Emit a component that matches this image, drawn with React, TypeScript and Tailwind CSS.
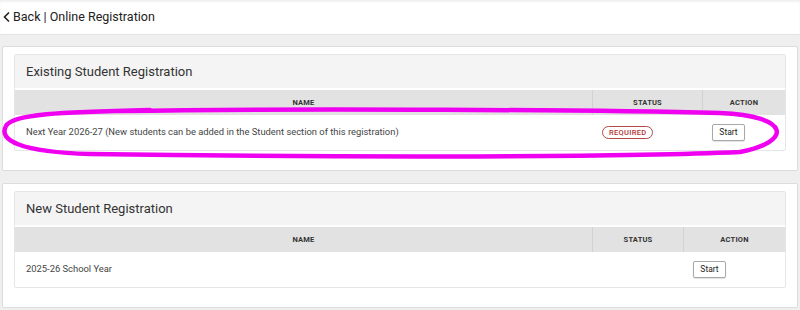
import React from 'react'

type Row = {
    name: string
    required?: boolean
}

type SectionProps = {
    title: string
    rows: Row[]
    statusWidth: string
    actionWidth: string
}

const Section = ({ title, rows, statusWidth, actionWidth }: SectionProps) => {
    return (
        <div className="mx-[2px] bg-white border border-[#dcdcdc] rounded-[2px] px-[11px] pt-[7px] pb-[19px]">
            <div className="border border-[#e6e6e6] rounded-[2px]">
                <div className="h-[33px] bg-[#f4f4f4] flex items-center px-[11px] text-[13px] text-[#333]">
                    {title}
                </div>
                <div className="h-[2px] bg-white" />
                <div className="flex h-[25px] bg-[#e2e2e2] text-[7.5px] font-bold text-[#333] tracking-[0.2px]">
                    <div className="flex-1 flex items-center justify-center">NAME</div>
                    <div className={`${statusWidth} flex items-center justify-center border-l border-[#d2d2d2]`}>STATUS</div>
                    <div className={`${actionWidth} flex items-center justify-center border-l border-[#d2d2d2]`}>ACTION</div>
                </div>
                {rows.map((r) => (
                    <div key={r.name} className="flex h-[35px] items-center text-[9.4px] text-[#444]">
                        <div className="flex-1 px-[11px]">{r.name}</div>
                        <div className={`${statusWidth} flex items-center pl-[10px]`}>
                            {r.required && (
                                <span className="border border-[#b04a4a] rounded-full px-[6px] h-[13px] flex items-center text-[7.5px] font-medium text-[#b03333] tracking-[0.3px]">
                                    REQUIRED
                                </span>
                            )}
                        </div>
                        <div className={`${actionWidth} flex items-center pl-[10px]`}>
                            <button className="h-[17px] w-[33px] border border-[#a8a8a8] rounded-[2px] bg-white text-[8.5px] text-[#222] shadow-[0_1px_1px_rgba(0,0,0,0.12)]">
                                Start
                            </button>
                        </div>
                    </div>
                ))}
            </div>
        </div>
    )
}

const App = () => {
    return (
        <div className="relative w-[800px] h-[310px] overflow-hidden bg-[#efefef]" style={{ fontFamily: 'Roboto, "Liberation Sans", sans-serif' }}>
            <div className="h-[35px] bg-white flex items-center px-[2px] border-b border-[#e4e4e4] shadow-[inset_0_2px_2px_rgba(0,0,0,0.06)]">
                <svg width="10" height="12" viewBox="0 0 10 12" className="mr-[1px]">
                    <path d="M7 1.5 L2.5 6 L7 10.5" fill="none" stroke="#222" strokeWidth="1.6" />
                </svg>
                <span className="text-[12.5px] text-[#222]">Back | Online Registration</span>
            </div>
            <div className="pt-[11px] flex flex-col gap-[12px]">
                <Section
                    title="Existing Student Registration"
                    rows={[{ name: 'Next Year 2026-27 (New students can be added in the Student section of this registration)', required: true }]}
                    statusWidth="w-[110px]"
                    actionWidth="w-[83px]"
                />
                <Section
                    title="New Student Registration"
                    rows={[{ name: '2025-26 School Year' }]}
                    statusWidth="w-[91px]"
                    actionWidth="w-[102px]"
                />
            </div>
            <svg className="absolute inset-0 pointer-events-none" width="800" height="310" viewBox="0 0 800 310">
                <path
                    d="M 120 111 C 300 108, 600 110, 720 113 C 792 116, 792 142, 740 152 C 600 158, 300 157, 90 154 C 20 152, -2 140, 6 126 C 12 114, 60 112, 150 110"
                    fill="none"
                    stroke="#f000f0"
                    strokeWidth="4.5"
                    strokeLinecap="round"
                />
            </svg>
        </div>
    )
}

export default App
